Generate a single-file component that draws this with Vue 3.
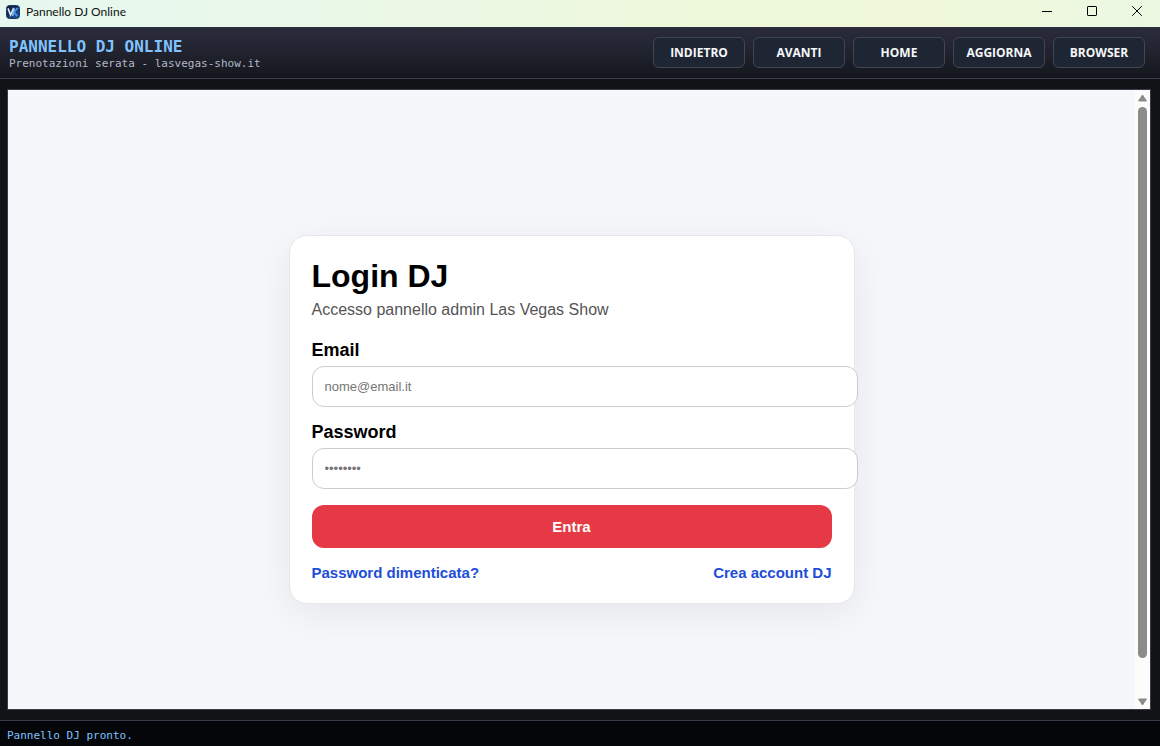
<script setup>
import { ref } from 'vue'

const navButtons = ['INDIETRO', 'AVANTI', 'HOME', 'AGGIORNA', 'BROWSER']
const email = ref('')
const password = ref('')
</script>

<template>
  <div class="window">
    <div class="titlebar">
      <svg class="app-icon" viewBox="0 0 14 14" aria-hidden="true">
        <defs>
          <linearGradient id="icon-bg" x1="0" y1="0" x2="1" y2="1">
            <stop offset="0" stop-color="#0d1c38" />
            <stop offset="0.5" stop-color="#12356b" />
            <stop offset="1" stop-color="#1d62b4" />
          </linearGradient>
        </defs>
        <rect x="0.5" y="0.5" width="13" height="13" rx="3" fill="url(#icon-bg)" stroke="#26344f" />
        <path d="M2 3.4 L4.6 10 L7.6 3" fill="none" stroke="#e4eefb" stroke-width="1.6" />
        <path d="M8.2 3.4 L6.6 11" fill="none" stroke="#9cc8f5" stroke-width="1.5" />
        <path d="M11.8 3 L8 7 L11 11" fill="none" stroke="#4aa3f2" stroke-width="1.6" />
      </svg>
      <span class="window-title">Pannello DJ Online</span>
      <div class="window-controls">
        <button type="button" aria-label="Riduci a icona">
          <svg viewBox="0 0 10 10"><path d="M0 5.5H10" /></svg>
        </button>
        <button type="button" aria-label="Ingrandisci">
          <svg viewBox="0 0 10 10"><rect x="0.5" y="0.5" width="9" height="9" rx="0.6" /></svg>
        </button>
        <button type="button" aria-label="Chiudi">
          <svg viewBox="0 0 10 10"><path d="M0.2 0.2L9.8 9.8M9.8 0.2L0.2 9.8" /></svg>
        </button>
      </div>
    </div>

    <header class="toolbar">
      <div class="brand">
        <div class="brand-name">PANNELLO DJ ONLINE</div>
        <div class="brand-sub">Prenotazioni serata - lasvegas-show.it</div>
      </div>
      <nav class="nav">
        <button v-for="label in navButtons" :key="label" type="button">{{ label }}</button>
      </nav>
    </header>

    <main class="stage">
      <div class="browser">
        <div class="page">
          <div class="page-body">
            <form class="card" @submit.prevent>
              <h1>Login DJ</h1>
              <p class="lead">Accesso pannello admin Las Vegas Show</p>
              <label for="email">Email</label>
              <input id="email" v-model="email" type="email" placeholder="nome@email.it" />
              <label for="password">Password</label>
              <input id="password" v-model="password" type="password" placeholder="••••••••" />
              <button class="submit" type="submit">Entra</button>
              <div class="links">
                <a href="#">Password dimenticata?</a>
                <a href="#">Crea account DJ</a>
              </div>
            </form>
          </div>
        </div>
        <div class="scrollbar" aria-hidden="true">
          <svg viewBox="0 0 9 8"><path d="M4.5 1L8.5 7H0.5Z" /></svg>
          <div class="track"><div class="thumb"></div></div>
          <svg viewBox="0 0 9 8"><path d="M4.5 7L8.5 1H0.5Z" /></svg>
        </div>
      </div>
    </main>

    <footer class="status">Pannello DJ pronto.</footer>
  </div>
</template>

<style>
body {
  margin: 0;
}
</style>

<style scoped>
.window {
  display: flex;
  flex-direction: column;
  height: 100vh;
  background: #121317;
  font-family: "Liberation Sans", Arial, sans-serif;
}
button {
  margin: 0;
  padding: 0;
  border: 0;
  background: none;
  cursor: pointer;
}

.titlebar {
  display: flex;
  align-items: center;
  flex: none;
  height: 27px;
  padding: 0 1px 0 6px;
  background: linear-gradient(90deg, #e6f8ef 0%, #e9f8e9 25%, #eef8db 60%, #eff8da 80%, #ebf8e2 100%);
}
.app-icon {
  width: 14px;
  height: 14px;
  margin-bottom: 4px;
}
.window-title {
  flex: 1;
  margin: 0 0 3px 6px;
  color: #111;
  font: 12px/16px Lato, sans-serif;
}
.window-controls {
  display: flex;
  align-self: flex-start;
}
.window-controls button {
  display: flex;
  align-items: center;
  justify-content: center;
  width: 45px;
  height: 22px;
}
.window-controls svg {
  width: 10px;
  height: 10px;
  fill: none;
  stroke: #000;
}

.toolbar {
  display: flex;
  align-items: center;
  justify-content: space-between;
  flex: none;
  height: 51px;
  padding: 0 15px 0 9px;
  border-bottom: 1px solid #3a3b4b;
  background: linear-gradient(#2b2d3d, #15171e);
}
.brand {
  padding-top: 4px;
  font-family: "DejaVu Sans Mono", monospace;
}
.brand-name {
  color: #7fc3ff;
  font-size: 16px;
  font-weight: 700;
  line-height: 18px;
}
.brand-sub {
  color: #b3b8c4;
  font-size: 11px;
  line-height: 16px;
}
.nav {
  display: flex;
  gap: 8px;
}
.nav button {
  box-sizing: border-box;
  width: 92px;
  height: 31px;
  border: 1px solid #414654;
  border-radius: 6px;
  background: #1f2633;
  color: #f5f7fa;
  font: 700 12px/16px "Open Sans", sans-serif;
}

.stage {
  display: flex;
  flex: 1;
  min-height: 0;
  padding: 10px 9px 10px 7px;
}
.browser {
  display: flex;
  flex: 1;
  overflow: hidden;
  border: 1px solid #3a3b49;
  background: #f5f7fb;
}
.page {
  flex: 1;
  overflow: hidden;
}
.page-body {
  display: flex;
  align-items: center;
  justify-content: center;
  min-height: calc(100% + 40px);
}
.card {
  width: 520px;
  padding: 22px;
  border: 1px solid #e6e7ea;
  border-radius: 18px;
  background: #fff;
  box-shadow: 0 10px 40px rgba(0, 0, 0, 0.07);
}
h1 {
  margin: 0 0 7px;
  color: #000;
  font-size: 32px;
  line-height: 36px;
}
.lead {
  margin: 0 0 21px;
  color: #555;
  font-size: 16px;
  line-height: 18px;
}
label {
  display: block;
  margin-bottom: 6px;
  color: #000;
  font: 700 18px/20px "Liberation Sans", Arial, sans-serif;
}
input {
  display: block;
  box-sizing: content-box;
  width: 100%;
  height: 15px;
  margin: 0 0 15px;
  padding: 12px;
  border: 1px solid #ccc;
  border-radius: 12px;
  outline: none;
  background: #fff;
  color: #000;
  font: 13px/15px "Liberation Sans", Arial, sans-serif;
}
input::placeholder {
  color: #757575;
}
.submit {
  width: 100%;
  height: 43px;
  margin-top: 1px;
  border-radius: 12px;
  background: #e63946;
  color: #fff;
  font: 700 15px/17px "Liberation Sans", Arial, sans-serif;
}
.links {
  display: flex;
  justify-content: space-between;
  margin-top: 16px;
  font: 700 15px/17px "Liberation Sans", Arial, sans-serif;
}
.links a {
  color: #1d4ed8;
  text-decoration: none;
}

.scrollbar {
  display: flex;
  flex-direction: column;
  align-items: center;
  flex: none;
  gap: 5px;
  width: 15px;
  padding: 4px 0 3px;
  box-sizing: border-box;
  background: #fcfcfc;
}
.scrollbar svg {
  width: 9px;
  height: 8px;
  fill: #8b8b8b;
  stroke: #8b8b8b;
  stroke-linejoin: round;
}
.track {
  flex: 1;
}
.thumb {
  width: 9px;
  height: 94%;
  border-radius: 5px;
  background: #8b8b8b;
}

.status {
  flex: none;
  padding: 8px 7px 3px;
  border-top: 1px solid #3a3b49;
  background: #05060a;
  color: #7fc3ff;
  font: 11px/14px "DejaVu Sans Mono", monospace;
}
</style>
